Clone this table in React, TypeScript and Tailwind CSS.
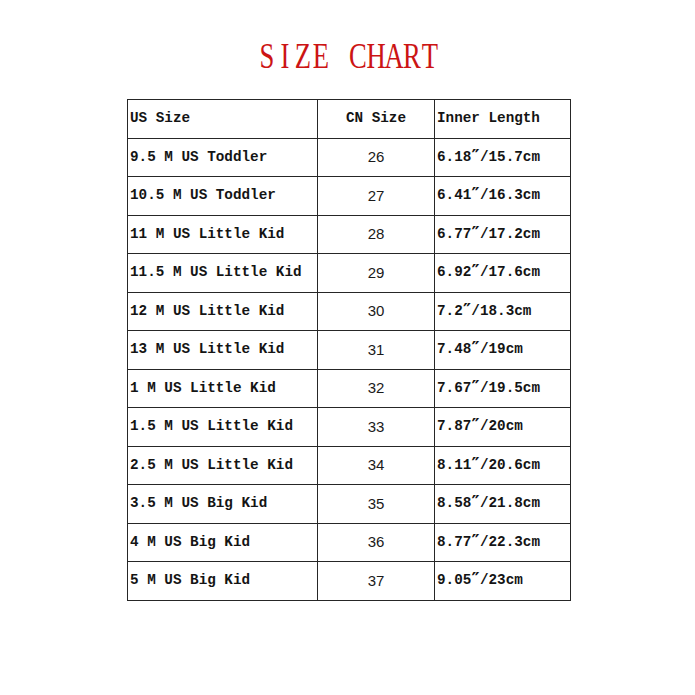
import React from "react";

type Row = { us: string; cn: string; len: string };

const rows: Row[] = [
  { us: "9.5 M US Toddler", cn: "26", len: "6.18″/15.7cm" },
  { us: "10.5 M US Toddler", cn: "27", len: "6.41″/16.3cm" },
  { us: "11 M US Little Kid", cn: "28", len: "6.77″/17.2cm" },
  { us: "11.5 M US Little Kid", cn: "29", len: "6.92″/17.6cm" },
  { us: "12 M US Little Kid", cn: "30", len: "7.2″/18.3cm" },
  { us: "13 M US Little Kid", cn: "31", len: "7.48″/19cm" },
  { us: "1 M US Little Kid", cn: "32", len: "7.67″/19.5cm" },
  { us: "1.5 M US Little Kid", cn: "33", len: "7.87″/20cm" },
  { us: "2.5 M US Little Kid", cn: "34", len: "8.11″/20.6cm" },
  { us: "3.5 M US Big Kid", cn: "35", len: "8.58″/21.8cm" },
  { us: "4 M US Big Kid", cn: "36", len: "8.77″/22.3cm" },
  { us: "5 M US Big Kid", cn: "37", len: "9.05″/23cm" },
];

const mono = "font-['Liberation_Mono',monospace] font-bold text-[14.3px] text-[#141414]";
const cell = "border border-[#262626]";

// title letters sit in even cells, like a half-width CJK serif face
const Title: React.FC<{ text: string }> = ({ text }) => (
  <h1 className="mt-[36px] h-[40px] flex justify-center pl-[2px] font-['Liberation_Serif',serif] text-[36px] leading-[40px] text-[#cc1414]">
    {text.split("").map((ch, i) => (
      <span key={i} className="w-[18.1px] flex justify-center">
        <span className="inline-block scale-x-[0.74]">{ch === " " ? "\u00a0" : ch}</span>
      </span>
    ))}
  </h1>
);

// the inch mark is slanted in the chart, so it gets a face that has one
const Length: React.FC<{ value: string }> = ({ value }) => {
  const [inch, cm] = value.split("″");
  return (
    <>
      {inch}
      <span className="inline-block w-[8.6px] text-center align-top leading-[18px] text-[18px] font-['DejaVu_Sans',sans-serif] font-bold">″</span>
      {cm}
    </>
  );
};

const App: React.FC = () => {
  return (
    <div className="w-[695px] h-[695px] bg-white flex flex-col">
      <Title text="SIZE CHART" />
      <table className="mt-[23px] ml-[127px] w-[443px] border-collapse table-fixed">
        <colgroup>
          <col className="w-[190px]" />
          <col className="w-[117px]" />
          <col className="w-[136px]" />
        </colgroup>
        <tbody>
          <tr className="h-[38.5px]">
            <td className={`${cell} pl-[2px] ${mono}`}>US Size</td>
            <td className={`${cell} text-center ${mono}`}>CN Size</td>
            <td className={`${cell} pl-[2px] ${mono}`}>Inner Length</td>
          </tr>
          {rows.map((r) => (
            <tr key={r.us} className="h-[38.5px]">
              <td className={`${cell} pl-[2px] ${mono}`}>{r.us}</td>
              <td className={`${cell} text-center text-[15px] text-[#1a1a1a] font-['Liberation_Sans',sans-serif]`}>
                {r.cn}
              </td>
              <td className={`${cell} pl-[2px] ${mono}`}>
                <Length value={r.len} />
              </td>
            </tr>
          ))}
        </tbody>
      </table>
    </div>
  );
};

export default App;
